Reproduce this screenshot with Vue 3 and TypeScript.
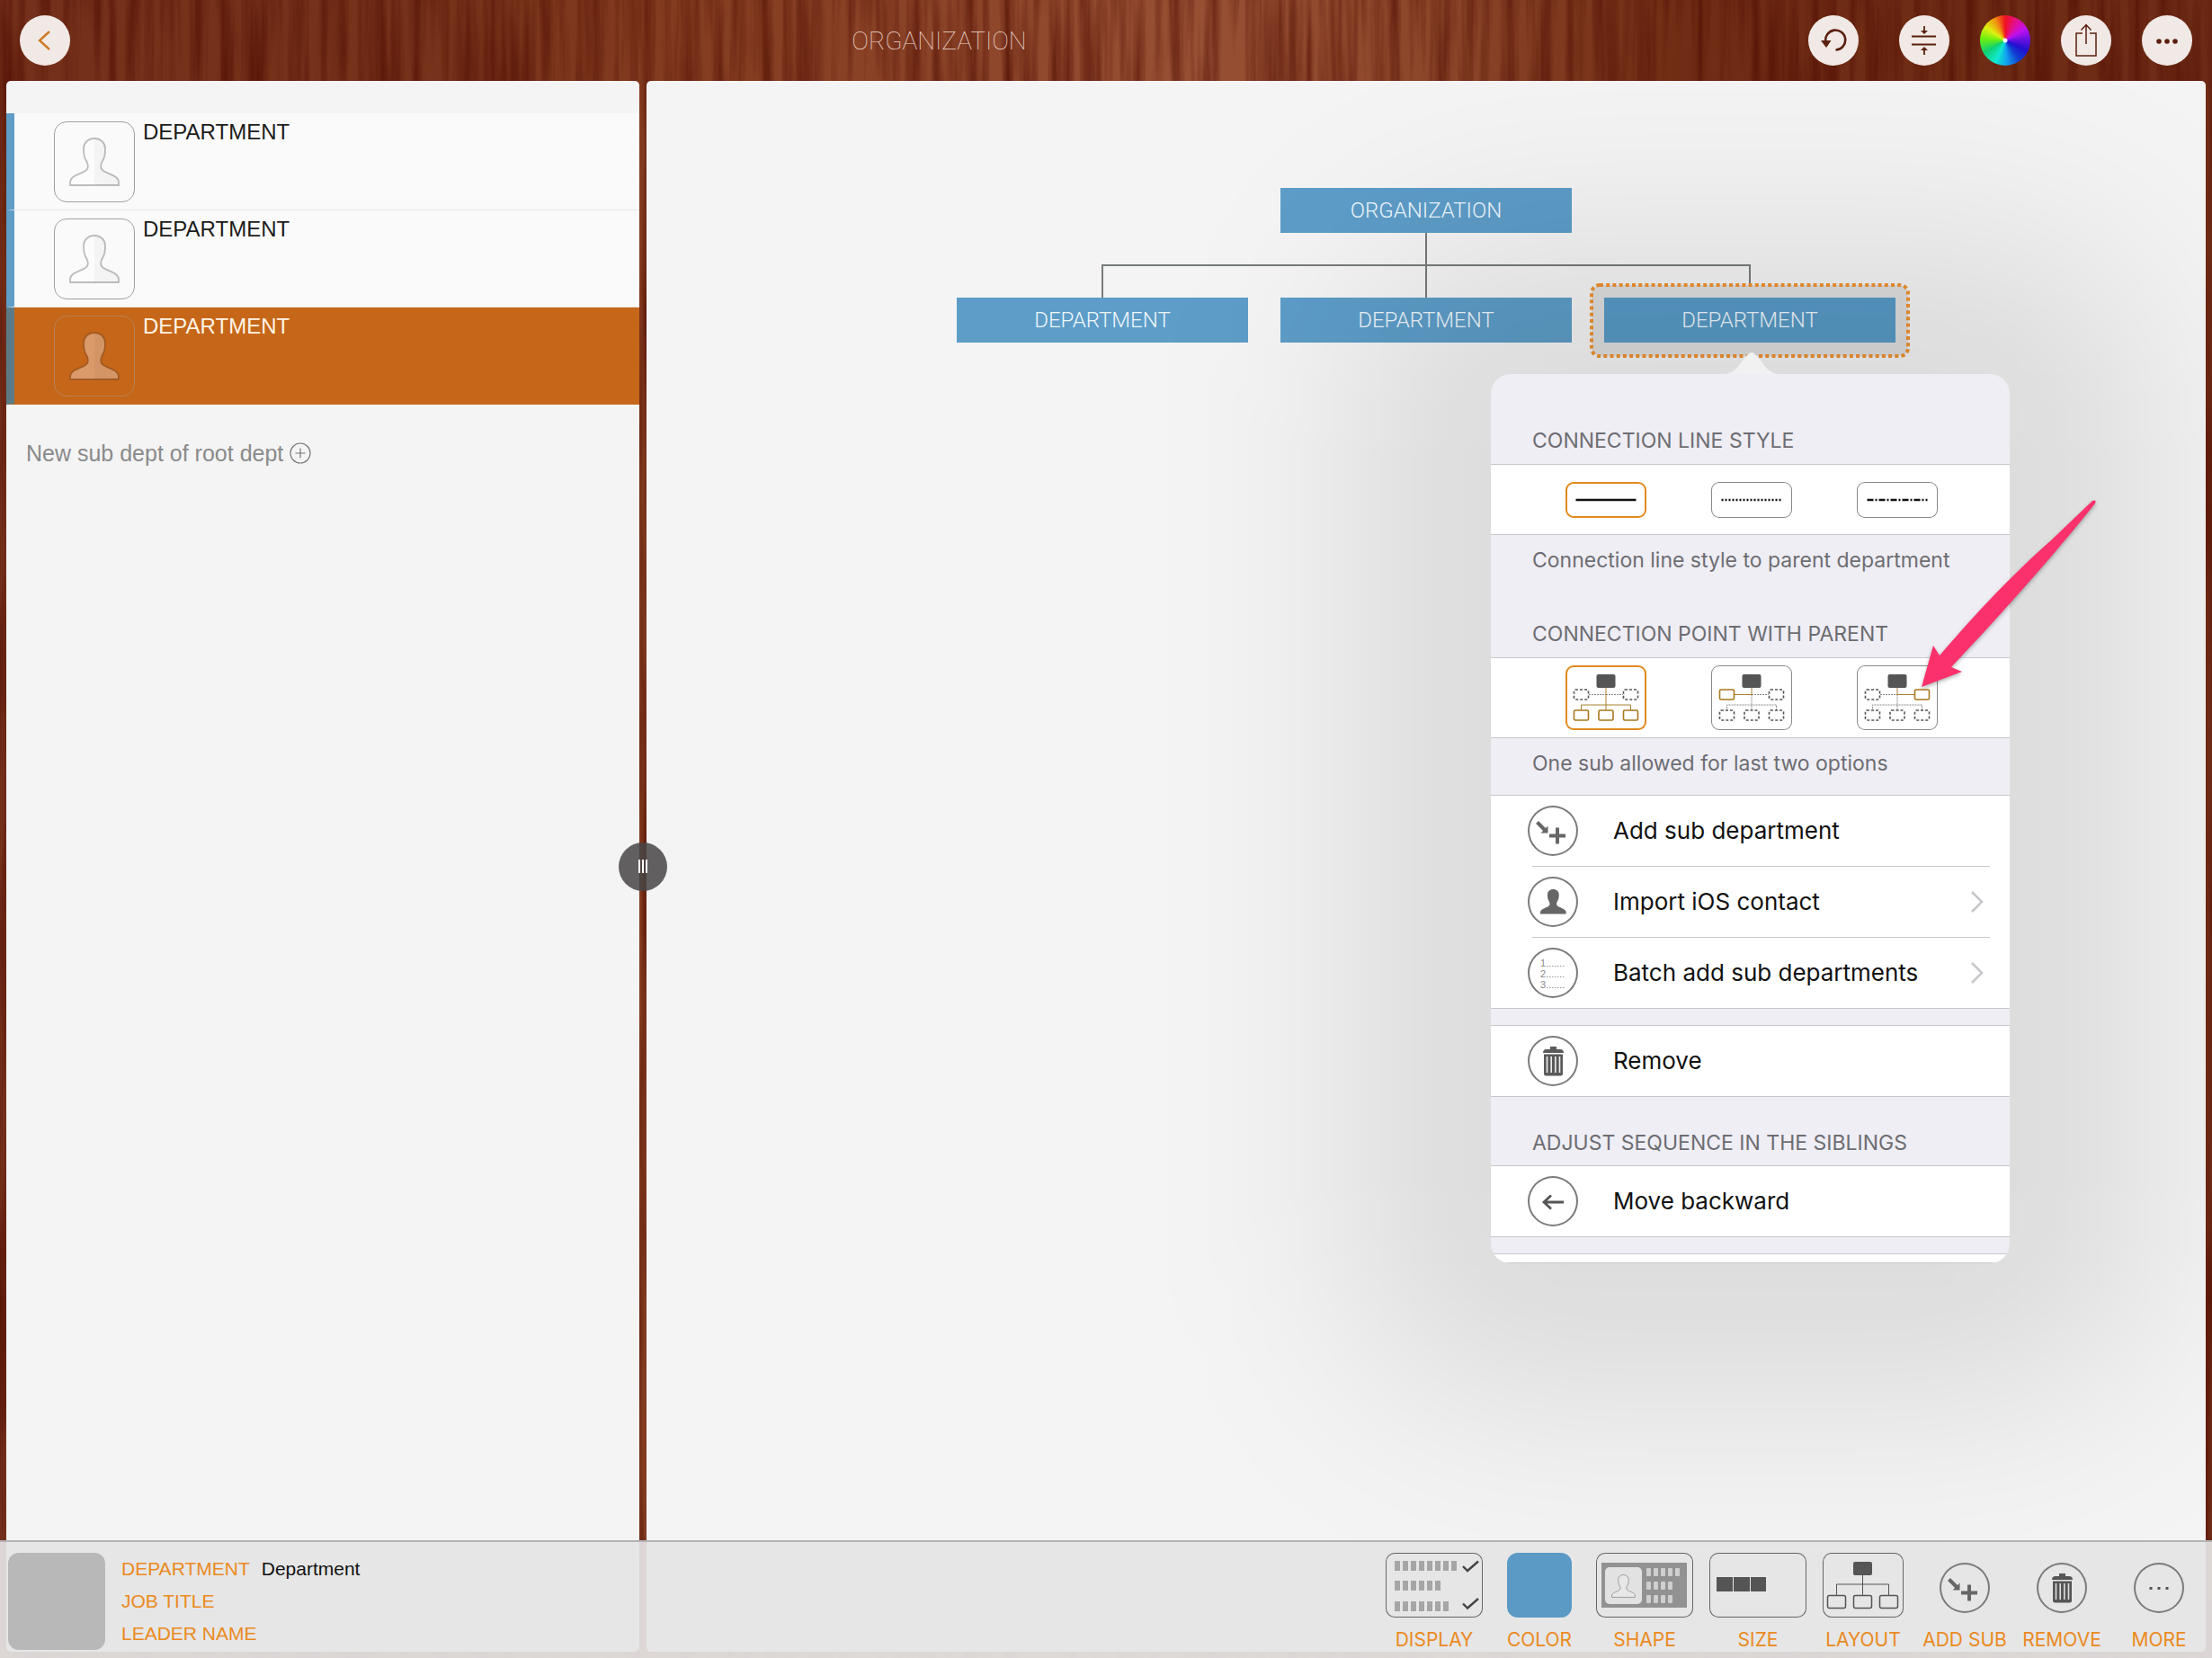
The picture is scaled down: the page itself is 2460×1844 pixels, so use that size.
<script setup lang="ts">
import { ref } from 'vue'

interface ToolbarItem {
  id: string
  label: string
  kind: 'wide' | 'square' | 'layout' | 'round'
}

const personPath =
  'M28 1c-7 0-12 5-12 11 0 3 0 5 .6 8 .4 3 2 5 3.400 8 1.500 4 1 7-2 9C12 41 1 42 1 50v3h54v-3c0-8-11-9-17-13-3-2-3.500-5-2-9 1.400-3 3-5 3.400-8 .6-3 .6-5 .6-8C40 6 35 1 28 1z'

const departments = ['DEPARTMENT', 'DEPARTMENT', 'DEPARTMENT']
const selected = ref(2)
const lineStyle = ref('solid')
const lineStyles = [
  { id: 'solid', label: 'Solid line', dash: '' },
  { id: 'dotted', label: 'Dotted line', dash: '2 2' },
  { id: 'dashdot', label: 'Dash-dot line', dash: '7 2 2 2' },
]
const connection = ref('bottom')
const connections = [
  { id: 'bottom', label: 'Below parent' },
  { id: 'left', label: 'Left of parent' },
  { id: 'right', label: 'Right of parent' },
]

const actions = [
  { id: 'add', label: 'Add sub department', more: false },
  { id: 'contact', label: 'Import iOS contact', more: true },
  { id: 'batch', label: 'Batch add sub departments', more: true },
]

const tools: ToolbarItem[] = [
  { id: 'display', label: 'DISPLAY', kind: 'wide' },
  { id: 'color', label: 'COLOR', kind: 'square' },
  { id: 'shape', label: 'SHAPE', kind: 'wide' },
  { id: 'size', label: 'SIZE', kind: 'wide' },
  { id: 'layout', label: 'LAYOUT', kind: 'layout' },
  { id: 'add', label: 'ADD SUB', kind: 'round' },
  { id: 'remove', label: 'REMOVE', kind: 'round' },
  { id: 'more', label: 'MORE', kind: 'round' },
]

const fields = [
  { id: 'department', label: 'DEPARTMENT', value: 'Department' },
  { id: 'job', label: 'JOB TITLE', value: '' },
  { id: 'leader', label: 'LEADER NAME', value: '' },
]

const displayRows = [
  { y: 9, count: 8 },
  { y: 31, count: 6 },
  { y: 54, count: 7 },
]
const shapeRows = [
  { y: 17, count: 5 },
  { y: 32, count: 4 },
  { y: 47, count: 4 },
]
</script>

<template>
  <div class="app">
    <svg class="wood" aria-hidden="true">
      <defs>
        <linearGradient id="tone">
          <stop offset="0" stop-color="#74301a" />
          <stop offset="0.2" stop-color="#76321a" />
          <stop offset="0.3" stop-color="#843c20" />
          <stop offset="0.42" stop-color="#8c4428" />
          <stop offset="0.54" stop-color="#985034" />
          <stop offset="0.66" stop-color="#8a4428" />
          <stop offset="0.76" stop-color="#702c14" />
          <stop offset="1" stop-color="#6e2c16" />
        </linearGradient>
        <filter id="grain" x="0" y="0" width="100%" height="100%" color-interpolation-filters="sRGB">
          <feTurbulence type="fractalNoise" baseFrequency="0.07 0.003" numOctaves="4" seed="8" />
          <feColorMatrix values="0 0 0 0 0.3  0 0 0 0 0.04  0 0 0 0 0  2.2 0 0 0 -0.85" />
        </filter>
      </defs>
      <rect width="100%" height="100%" fill="url(#tone)" />
      <rect width="100%" height="100%" filter="url(#grain)" opacity="0.7" />
    </svg>

    <header class="topbar">
      <button class="disc" aria-label="Back">
        <svg viewBox="0 0 56 56"><path d="M33 18 22 28l11 10" fill="none" stroke="#cf7a22" stroke-width="2.400" /></svg>
      </button>
      <h1 class="title">ORGANIZATION</h1>
      <div class="top-actions">
        <button class="disc undo" aria-label="Undo">
          <svg viewBox="0 0 56 56">
            <path d="M19.500 30a11 11 0 1 1 11 8.500" fill="none" stroke="#5a1f0e" stroke-width="2.600" />
            <path d="M14 28h11.500l-5.500 8z" fill="#5a1f0e" />
          </svg>
        </button>
        <button class="disc" aria-label="Compress">
          <svg viewBox="0 0 56 56" fill="none" stroke="#5a1f0e" stroke-width="1.800">
            <path d="M14 23.500h27M14 32.500h27M28 12v7M28 44v-7" />
            <path d="M24 17h8l-4 4zM24 39h8l-4-4z" fill="#5a1f0e" stroke="none" />
          </svg>
        </button>
        <button class="disc wheel" aria-label="Colors"></button>
        <button class="disc" aria-label="Share">
          <svg viewBox="0 0 56 56" fill="none" stroke="#5a1f0e" stroke-width="1.500">
            <path d="M24 20h-7v25h22V20h-7M28 32V11M22.500 16.500 28 10.500l5.500 6" />
          </svg>
        </button>
        <button class="disc" aria-label="More">
          <svg viewBox="0 0 56 56" fill="#5a1f0e">
            <circle cx="19" cy="29" r="2.800" /><circle cx="28" cy="29" r="2.800" /><circle cx="37" cy="29" r="2.800" />
          </svg>
        </button>
      </div>
    </header>

    <main class="workspace">
      <aside class="sidebar">
        <ul class="dept-list">
          <li v-for="(name, i) in departments" :key="i">
            <button class="dept" :class="{ active: i === selected }" @click="selected = i">
              <span class="avatar">
                <svg viewBox="0 0 56 54">
                  <path class="person" :d="personPath" />
                  <path class="person-half" d="M28 1v52h27v-3c0-8-11-9-17-13-3-2-3.500-5-2-9 1.400-3 3-5 3.400-8 .6-3 .6-5 .6-8C40 6 35 1 28 1z" />
                </svg>
              </span>
              <span class="dept-name">{{ name }}</span>
            </button>
          </li>
        </ul>
        <button class="new-dept">
          <span>New sub dept of root dept</span>
          <svg viewBox="0 0 24 24" fill="none" stroke="#777" stroke-width="1.200">
            <circle cx="12" cy="12" r="11" /><path d="M12 6.500v11M6.500 12h11" />
          </svg>
        </button>
      </aside>

      <div class="splitter">
        <button class="handle" aria-label="Resize panels"><i></i><i></i><i></i></button>
      </div>

      <section class="canvas">
        <div class="chart">
          <button class="node">ORGANIZATION</button>
          <svg class="links" viewBox="0 0 1044 72" fill="none" stroke="#777b7b" stroke-width="2">
            <path d="M522 0v72M162 72V36h720v36" />
          </svg>
          <div class="row">
            <button class="node">DEPARTMENT</button>
            <button class="node">DEPARTMENT</button>
            <div class="selection">
              <svg class="frame">
                <rect x="2" y="2" rx="9" width="352" height="79" fill="#dedede" stroke="#ee9230" stroke-width="4" stroke-dasharray="4 3.200" />
              </svg>
              <button class="node current">DEPARTMENT</button>

              <div class="popover">
                <svg class="tip" viewBox="0 0 60 24"><path d="M0 24C14 23 19 8 26 2q4-4 8 0C41 8 46 23 60 24z" fill="#f1f1f2" /></svg>
                <div class="sheet">
                  <h2 class="caption first">CONNECTION LINE STYLE</h2>
                  <div class="group options">
                    <label v-for="s in lineStyles" :key="s.id" class="option short" :class="{ on: lineStyle === s.id }">
                      <input v-model="lineStyle" type="radio" name="line" :value="s.id" :aria-label="s.label" />
                      <svg viewBox="0 0 90 40"><path d="M11.500 20h67" stroke="#111" stroke-width="2.400" :stroke-dasharray="s.dash" /></svg>
                    </label>
                  </div>
                  <p class="note">Connection line style to parent department</p>
                  <h2 class="caption second">CONNECTION POINT WITH PARENT</h2>
                  <div class="group options tall-group">
                    <label v-for="c in connections" :key="c.id" class="option tall" :class="{ on: connection === c.id }">
                      <input v-model="connection" type="radio" name="connection" :value="c.id" :aria-label="c.label" />
                      <svg viewBox="0 0 90 72" class="org">
                        <rect x="34.500" y="10" width="21" height="15" rx="2" fill="#555" />
                        <path class="l" :class="{ hot: c.id === 'left' }" d="M26 32.500h19" />
                        <path class="l" :class="{ hot: c.id === 'right' }" d="M45 32.500h19" />
                        <path class="l" :class="{ hot: c.id === 'bottom' }" d="M45 32.500V51M17.500 51v-7h55v7" />
                        <path class="l hot" d="M45 25v8" />
                        <rect class="b" :class="{ hot: c.id === 'left' }" x="9.500" y="27" width="16" height="11" rx="1.500" />
                        <rect class="b" :class="{ hot: c.id === 'right' }" x="64.500" y="27" width="16" height="11" rx="1.500" />
                        <rect v-for="x in [9.5, 37, 64.5]" :key="x" class="b" :class="{ hot: c.id === 'bottom' }" :x="x" y="50" width="16" height="11" rx="1.500" />
                      </svg>
                    </label>
                  </div>
                  <p class="note short-note">One sub allowed for last two options</p>
                  <div class="group">
                    <button v-for="a in actions" :key="a.id" class="action">
                      <span class="ring">
                        <svg v-if="a.id === 'add'" viewBox="0 0 56 56">
                          <path d="M10.500 18.500 20 28" stroke="#666" stroke-width="4" /><path d="M22.500 22.500V30.500H14.500z" fill="#666" />
                          <path d="M33 24.500v18M24 33.500h18" stroke="#666" stroke-width="4" />
                        </svg>
                        <svg v-else-if="a.id === 'contact'" viewBox="0 0 56 56">
                          <path :d="personPath" fill="#666" transform="translate(13.500 13.500) scale(.53)" />
                        </svg>
                        <svg v-else viewBox="0 0 56 56">
                          <g fill="#888" font-size="11" font-family="'Liberation Sans', Arial, sans-serif">
                            <text x="14" y="21">1</text><text x="14" y="33">2</text><text x="14" y="45">3</text>
                          </g>
                          <path d="M21 20.500h21M21 32.500h21M21 44.500h21" stroke="#999" stroke-width="1.200" stroke-dasharray="1.500 1.500" />
                        </svg>
                      </span>
                      <span class="action-text">{{ a.label }}</span>
                      <svg v-if="a.more" class="chev" viewBox="0 0 14 24"><path d="m1 1 11 11L1 23" fill="none" stroke="#c7c7cc" stroke-width="2.600" /></svg>
                    </button>
                  </div>
                  <div class="group spaced">
                    <button class="action">
                      <span class="ring">
                        <svg viewBox="0 0 56 56" fill="#5a5a5a">
                          <path d="M25 12h7v3h-7zM17 19q0-4 4-4h15q4 0 4 4z" />
                          <path d="M18 20.500h21V42q0 2.500-2.500 2.500h-16Q18 44.500 18 42z" />
                          <path d="M21.500 23v18M26.200 23v18M30.800 23v18M35.500 23v18" stroke="#eee" stroke-width="1.600" />
                        </svg>
                      </span>
                      <span class="action-text">Remove</span>
                    </button>
                  </div>
                  <h2 class="caption third">ADJUST SEQUENCE IN THE SIBLINGS</h2>
                  <div class="group">
                    <button class="action">
                      <span class="ring">
                        <svg viewBox="0 0 56 56" fill="none" stroke="#555" stroke-width="2.800"><path d="M40 29H18M26 21.500 18 29l8 7.500" /></svg>
                      </span>
                      <span class="action-text">Move backward</span>
                    </button>
                  </div>
                  <div class="group spaced rest"></div>
                </div>
                <svg class="pointer" viewBox="0 0 202 214">
                  <path d="M6 209 19 163l7 11C60 135 98 92 150 46L196 2q5-2 3 3C150 66 95 128 39 187l12 5z" fill="#fb316c" />
                </svg>
              </div>
            </div>
          </div>
        </div>
      </section>
    </main>

    <footer class="toolbar">
      <div class="thumb"></div>
      <div class="fields">
        <div v-for="f in fields" :key="f.id" class="field">
          <label :for="f.id">{{ f.label }}</label>
          <input :id="f.id" type="text" :value="f.value" />
        </div>
      </div>
      <nav class="tools">
        <button v-for="t in tools" :key="t.id" class="tool" :class="[t.kind, t.id]">
          <span class="tool-icon">
            <svg v-if="t.id === 'display'" viewBox="0 0 108 72">
              <template v-for="r in displayRows" :key="r.y">
                <rect v-for="n in r.count" :key="n" :x="1 + n * 9" :y="r.y" width="6" height="11" fill="#a6a6a6" />
              </template>
              <path d="m86 15 5 5 12-10.500M86 56.500l5 5L103 51" fill="none" stroke="#444" stroke-width="2.400" />
            </svg>
            <svg v-else-if="t.id === 'shape'" viewBox="0 0 108 72">
              <rect x="6" y="11" width="95" height="50" fill="#929292" />
              <rect x="10" y="16" width="41" height="41" rx="5" fill="#e2e2e2" />
              <path :d="personPath" fill="#e8e8e8" stroke="#999" stroke-width="2" transform="translate(17 24) scale(.48)" />
              <template v-for="r in shapeRows" :key="r.y">
                <rect v-for="n in r.count" :key="n" :x="48 + n * 8" :y="r.y" width="5" height="9" rx="1" fill="#cfcfcf" />
              </template>
            </svg>
            <svg v-else-if="t.id === 'size'" viewBox="0 0 108 72">
              <path d="M8 27h18v16H8zM27 27h18v16H27zM46 27h17v16H46z" fill="#555" />
            </svg>
            <svg v-else-if="t.id === 'layout'" viewBox="0 0 90 72" fill="none" stroke="#555">
              <rect x="34" y="10" width="21" height="15" rx="2" fill="#555" stroke="none" />
              <path d="M44.500 25v22M15.500 47V35h58v12" />
              <g stroke-width="1.500">
                <rect x="5.500" y="47.500" width="20" height="14" rx="2" /><rect x="34.500" y="47.500" width="20" height="14" rx="2" /><rect x="63.500" y="47.500" width="20" height="14" rx="2" />
              </g>
            </svg>
            <svg v-else-if="t.id === 'add'" viewBox="0 0 56 56">
              <path d="M10.500 18.500 20 28" stroke="#666" stroke-width="4" /><path d="M22.500 22.500V30.500H14.500z" fill="#666" />
              <path d="M33 24.500v18M24 33.500h18" stroke="#666" stroke-width="4" />
            </svg>
            <svg v-else-if="t.id === 'remove'" viewBox="0 0 56 56" fill="#555">
              <path d="M25 12h7v3h-7zM17 19q0-4 4-4h15q4 0 4 4z" />
              <path d="M18 20.500h21V42q0 2.500-2.500 2.500h-16Q18 44.500 18 42z" />
              <path d="M21.500 23v18M26.200 23v18M30.800 23v18M35.500 23v18" stroke="#ddd" stroke-width="1.600" />
            </svg>
            <svg v-else-if="t.id === 'more'" viewBox="0 0 56 56" fill="#555">
              <path d="M17.500 27h3v3h-3zM26.500 27h3v3h-3zM35.500 27h3v3h-3z" />
            </svg>
          </span>
          <span class="tool-label">{{ t.label }}</span>
        </button>
      </nav>
    </footer>
  </div>
</template>

<style>
body {
  margin: 0;
}
</style>

<style scoped>
.app {
  position: relative;
  display: flex;
  flex-direction: column;
  min-height: 100vh;
  overflow: hidden;
  background: #6c2812;
  font-family: 'Liberation Sans', Arial, sans-serif;
}
.app *,
.app *::before {
  box-sizing: border-box;
}
button {
  margin: 0;
  padding: 0;
  border: 0;
  background: none;
  color: inherit;
  font: inherit;
  cursor: pointer;
}
svg {
  display: block;
}
.wood {
  position: absolute;
  inset: 0;
  width: 100%;
  height: 100%;
}
.topbar {
  position: relative;
  display: flex;
  align-items: center;
  height: 90px;
  padding: 0 22px;
}
.disc {
  flex: none;
  width: 56px;
  height: 56px;
  border-radius: 50%;
  background: #f1e9e6;
}
.disc svg {
  width: 56px;
  height: 56px;
}
.title {
  flex: 1;
  margin: 0;
  padding-top: 2px;
  text-align: center;
  font: 100 28px/36px Roboto, sans-serif;
  color: #ecd9d0;
}
.top-actions {
  display: flex;
  gap: 34px;
}
.undo {
  margin-right: 11px;
}
.wheel {
  background:
    radial-gradient(circle, #fff 0 2px, transparent 3px),
    conic-gradient(#f01020, #e010a0 35deg, #c010f0 60deg, #7010e0 85deg, #2010d0 115deg, #1040d0 145deg, #10a0f0 175deg, #10e8d0 205deg, #10d070 240deg, #70f010 275deg, #e0f010 305deg, #f09010 335deg, #f01020);
}
.workspace {
  position: relative;
  flex: 1;
  display: grid;
  grid-template-columns: 704px 8px 1fr;
  padding: 0 7px 7px;
}
.sidebar,
.canvas {
  border-radius: 5px;
  background: #f4f4f4;
  overflow: hidden;
}
.sidebar {
  padding-top: 36px;
}
.dept-list {
  margin: 0;
  padding: 0;
  list-style: none;
}
.dept {
  display: flex;
  align-items: flex-start;
  gap: 9px;
  width: 100%;
  height: 108px;
  padding: 9px 0 0 44px;
  border-left: 9px solid #5f9dc7;
  border-bottom: 1px solid #e6e6e6;
  background: #fafafa;
  color: #1c1c1c;
}
.avatar {
  display: grid;
  place-items: center;
  width: 90px;
  height: 90px;
  border: 1px solid #a0a0a0;
  border-radius: 14px;
}
.avatar svg {
  width: 56px;
  height: 54px;
}
.person {
  fill: #fcfcfc;
  stroke: #bdbdbd;
  stroke-width: 1.8;
}
.person-half {
  fill: #000;
  opacity: 0.03;
}
.dept-name {
  font-size: 24px;
  line-height: 24px;
}
.active {
  border-left-color: #5b7c87;
  border-bottom-color: #c66618;
  background: #c66618;
  color: #fff4e6;
}
.active .avatar {
  border-color: #ba8258;
}
.active .person {
  fill: #da9a69;
  stroke: #a55b22;
}
.new-dept {
  display: flex;
  align-items: center;
  gap: 7px;
  padding: 40px 22px;
  color: #8a8a8a;
  font-size: 25px;
  line-height: 28px;
}
.new-dept svg {
  width: 24px;
  height: 24px;
}
.splitter {
  position: relative;
  z-index: 1;
}
.handle {
  position: absolute;
  top: 50%;
  left: 50%;
  display: flex;
  justify-content: center;
  align-items: center;
  gap: 2px;
  width: 54px;
  height: 54px;
  margin: -27px 0 0 -27px;
  border-radius: 50%;
  background: rgba(72, 70, 70, 0.86);
}
.handle i {
  width: 2px;
  height: 15px;
  background: #fff;
}
.canvas {
  position: relative;
}
.chart {
  display: flex;
  flex-direction: column;
  align-items: center;
  padding-top: 119px;
}
.node {
  width: 324px;
  height: 50px;
  background: #5d9dc8;
  color: #eef7fd;
  font: 300 24px/50px Roboto, sans-serif;
}
.links {
  width: 1044px;
  height: 72px;
}
.row {
  display: flex;
  gap: 36px;
}
.selection {
  position: relative;
}
.frame {
  position: absolute;
  top: -16px;
  left: -16px;
  width: 356px;
  height: 83px;
}
.current {
  position: relative;
  background: #589ac6;
}
.popover {
  position: absolute;
  z-index: 1;
  top: 85px;
  left: -126px;
  width: 577px;
}
.popover::before {
  content: '';
  position: absolute;
  z-index: -1;
  inset: -150px;
  border-radius: 150px;
  background: rgba(0, 0, 0, 0.1);
  filter: blur(110px);
}
.tip {
  position: absolute;
  top: -24px;
  left: 260px;
  width: 60px;
  height: 24px;
}
.sheet {
  display: flex;
  flex-direction: column;
  height: 989px;
  border-radius: 22px;
  background: #efeef5;
  overflow: hidden;
  font-family: Inter, sans-serif;
}
.caption,
.note {
  margin: 0;
  padding-left: 46px;
  font-size: 23px;
  font-weight: 400;
  line-height: 28px;
  color: #6d6d72;
}
.caption.first {
  padding-top: 60px;
  padding-bottom: 12px;
}
.caption.second {
  padding-bottom: 12px;
}
.caption.third {
  padding-top: 37px;
  padding-bottom: 11px;
}
.note {
  padding-top: 14px;
  padding-bottom: 54px;
}
.short-note {
  padding-bottom: 21px;
}
.group {
  flex: none;
  border-top: 1px solid #c8c7cc;
  border-bottom: 1px solid #c8c7cc;
  background: #fff;
}
.options {
  display: flex;
  align-items: center;
  gap: 72px;
  height: 79px;
  padding-left: 83px;
}
.tall-group {
  height: 90px;
}
.option {
  position: relative;
  width: 90px;
  border-radius: 9px;
  box-shadow: inset 0 0 0 1px #888;
}
.option input {
  position: absolute;
  inset: 0;
  width: 100%;
  height: 100%;
  margin: 0;
  opacity: 0;
}
.option svg {
  position: relative;
  width: 100%;
  height: 100%;
  pointer-events: none;
}
.short {
  height: 40px;
}
.tall {
  height: 72px;
}
.on {
  box-shadow: inset 0 0 0 2px #e08a1e;
}
.l {
  fill: none;
  stroke: #888;
  stroke-dasharray: 2 1;
}
.b {
  fill: #fff;
  stroke: #555;
  stroke-width: 1.6;
  stroke-dasharray: 3 2;
}
.l.hot {
  stroke: #a8802f;
  stroke-dasharray: none;
}
.b.hot {
  stroke: #a8781c;
  stroke-dasharray: none;
}
.action {
  position: relative;
  display: flex;
  align-items: center;
  gap: 39px;
  width: 100%;
  height: 78px;
  padding: 0 29px 0 41px;
  text-align: left;
  color: #111;
}
.action + .action {
  height: 79px;
}
.action + .action::before {
  content: '';
  position: absolute;
  top: 0;
  left: 46px;
  right: 22px;
  height: 1px;
  background: #c8c7cc;
}
.ring,
.round .tool-icon {
  width: 56px;
  height: 56px;
  border-radius: 50%;
  box-shadow: inset 0 0 0 2px #7b7b7b;
}
.action-text {
  flex: 1;
  font-size: 26px;
  line-height: 32px;
}
.chev {
  width: 14px;
  height: 24px;
}
.spaced {
  margin-top: 18px;
}
.rest {
  flex: 1;
}
.pointer {
  position: absolute;
  top: 139px;
  left: 473px;
  width: 202px;
  height: 214px;
  filter: drop-shadow(0 2px 2px rgba(0, 0, 0, 0.3));
}
.toolbar {
  position: absolute;
  left: 0;
  right: 0;
  bottom: 0;
  z-index: 2;
  display: flex;
  height: 131px;
  padding: 12px 5px 0 9px;
  border-top: 2px solid #b4b2b6;
  background: rgba(228, 228, 228, 0.93);
}
.thumb {
  width: 108px;
  height: 108px;
  border-radius: 12px;
  background: #b8b8b8;
}
.fields {
  flex: 1;
  padding-left: 18px;
}
.field {
  display: flex;
  gap: 13px;
  height: 36px;
  font-size: 21px;
  line-height: 36px;
}
.field label {
  color: #ea8a22;
}
.field input {
  flex: 1;
  min-width: 0;
  padding: 0;
  border: 0;
  background: none;
  color: #111;
  font: inherit;
}
.tools {
  display: flex;
}
.tool {
  display: flex;
  flex-direction: column;
  align-items: center;
  justify-content: flex-start;
  width: 108px;
  height: 110px;
}
.tool.wide {
  width: 126px;
}
.tool.add {
  margin-left: 5px;
}
.tool-icon {
  border-radius: 10px;
  box-shadow: inset 0 0 0 1px #666;
}
.wide .tool-icon {
  width: 108px;
  height: 72px;
}
.layout .tool-icon {
  width: 90px;
  height: 72px;
}
.square .tool-icon {
  width: 72px;
  height: 72px;
  border-radius: 12px;
  background: #5a9ac5;
  box-shadow: none;
}
.round .tool-icon {
  margin-top: 11px;
  margin-bottom: 5px;
}
.tool-icon svg,
.ring svg {
  width: 100%;
  height: 100%;
}
.tool-label {
  margin-top: 12px;
  font: 400 21px/26px Inter, sans-serif;
  color: #ea8a22;
}
</style>
